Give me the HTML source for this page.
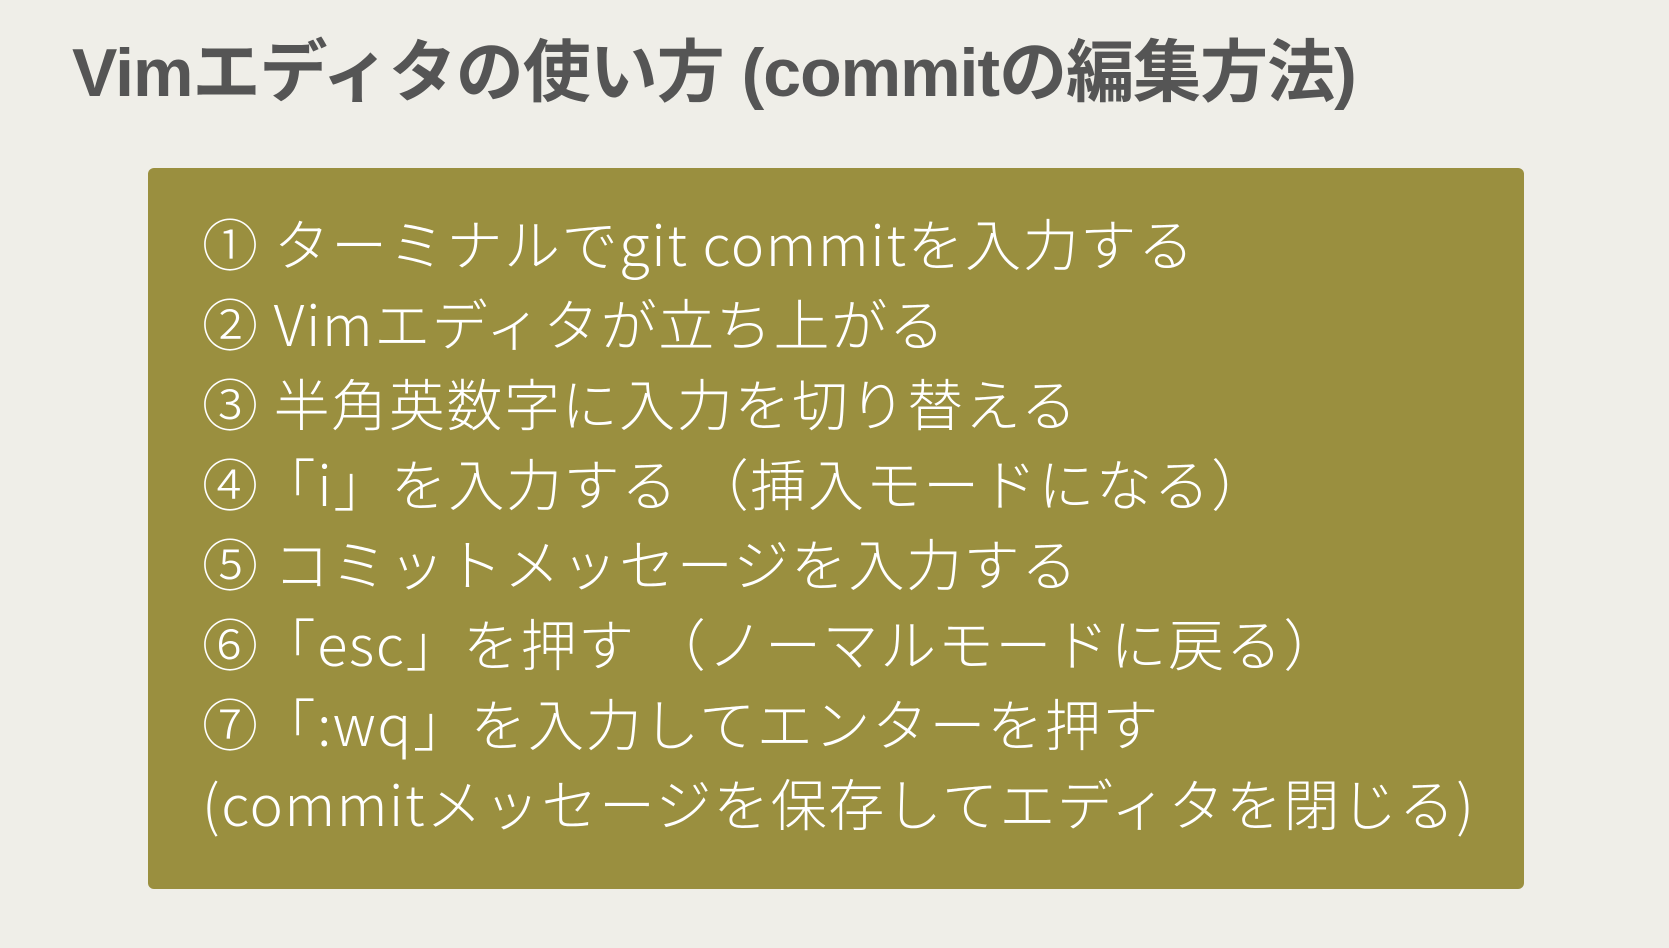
<!DOCTYPE html>
<html><head><meta charset="utf-8"><style>
html,body{margin:0;padding:0;}
body{width:1669px;height:948px;background:#efeee8;position:relative;overflow:hidden;font-family:"Liberation Sans","Noto Sans CJK JP",sans-serif;}
h1{position:absolute;left:72px;top:28px;margin:0;font-size:68px;line-height:90px;color:#555;font-weight:bold;letter-spacing:-1px;white-space:nowrap;}
.box{position:absolute;left:148px;top:168px;width:1376px;height:721px;background:#9a8f3f;border-radius:6px;}
.t{position:absolute;left:54px;top:35px;color:#fff;font-size:56px;line-height:80px;white-space:nowrap;font-family:"Noto Sans CJK JP","Liberation Sans",sans-serif;font-weight:300;letter-spacing:1.6px;}
</style></head><body>
<h1>Vimエディタの使い方 (commitの編集方法)</h1>
<div class="box"><div class="t">
① ターミナルでgit commitを入力する<br>
② Vimエディタが立ち上がる<br>
③ 半角英数字に入力を切り替える<br>
④「i」を入力する （挿入モードになる）<br>
⑤ コミットメッセージを入力する<br>
⑥「esc」を押す （ノーマルモードに戻る）<br>
⑦「:wq」を入力してエンターを押す<br>
(commitメッセージを保存してエディタを閉じる)
</div></div>
</body></html>
